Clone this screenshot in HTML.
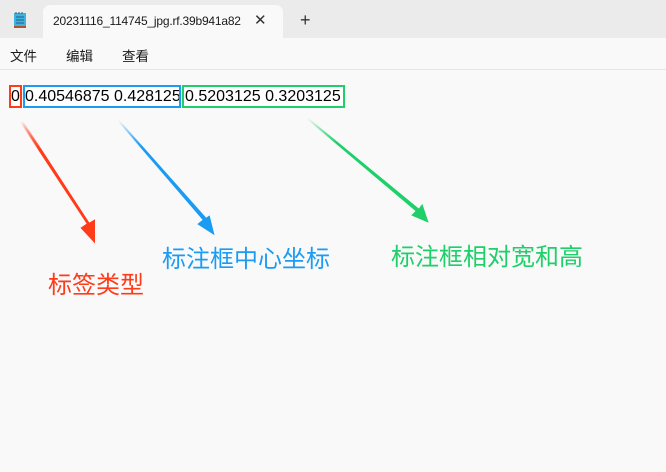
<!DOCTYPE html>
<html><head><meta charset="utf-8"><style>
*{margin:0;padding:0;box-sizing:border-box}
body{width:666px;height:472px;background:#f9f9f9;position:relative;overflow:hidden;font-family:"Liberation Sans","Noto Sans CJK SC",sans-serif}
.tabbar{position:absolute;left:0;top:0;width:666px;height:38px;background:#ebebeb}
.tab{position:absolute;left:43px;top:5px;width:240px;height:33px;background:#f9f9f9;border-radius:7px 7px 0 0}
.title{position:absolute;left:10px;top:9px;font-size:12px;color:#1a1a1a;letter-spacing:-0.2px}
.x{position:absolute;left:211px;top:6px;font-size:15px;color:#333}
.plus{position:absolute;left:300px;top:10px;font-size:18px;color:#333}
.menu{position:absolute;top:45px;font-size:13.5px;color:#1a1a1a}
.sep{position:absolute;left:0;top:69px;width:666px;height:1px;background:#e5e5e5}
.box{position:absolute;top:85px;height:23px;border:2px solid;background:#fff;overflow:hidden;font-size:16px;color:#000;white-space:pre;line-height:19px;padding-left:1px}
.lab{position:absolute;font-size:24px;white-space:nowrap}
</style></head><body>
<div class="tabbar">
<svg style="position:absolute;left:13px;top:11px" width="14" height="18" viewBox="0 0 14 18"><rect x="1" y="2" width="12" height="14" fill="#3fb2de"/><rect x="1" y="15" width="12" height="2" fill="#b4522a"/><g stroke="#1f5d86" stroke-width="1"><line x1="3" y1="6" x2="11" y2="6"/><line x1="3" y1="9" x2="11" y2="9"/><line x1="3" y1="12" x2="11" y2="12"/><line x1="3" y1="1" x2="3" y2="3"/><line x1="6" y1="1" x2="6" y2="3"/><line x1="9" y1="1" x2="9" y2="3"/></g></svg>
<div class="tab"><div class="title">20231116_114745_jpg.rf.39b941a82</div><div class="x">✕</div></div>
<div class="plus">+</div>
</div>
<div class="menu" style="left:10px">文件</div>
<div class="menu" style="left:66px">编辑</div>
<div class="menu" style="left:122px">查看</div>
<div class="sep"></div>
<div class="box" style="left:9px;width:13px;border-color:#ff3b1a;padding-left:0">0</div>
<div class="box" style="left:23px;width:158px;border-color:#1b9cf2;padding-left:0">0.40546875 0.428125</div>
<div class="box" style="left:182px;width:163px;border-color:#1ecf6a">0.5203125 0.3203125</div>
<svg style="position:absolute;left:0;top:0" width="666" height="472">
<defs>
<linearGradient id="gr" x1="20" y1="122" x2="93" y2="240" gradientUnits="userSpaceOnUse"><stop offset="0" stop-color="#ff3b1a" stop-opacity="0"/><stop offset=".25" stop-color="#ff3b1a"/></linearGradient>
<linearGradient id="gb" x1="118" y1="120" x2="212" y2="232" gradientUnits="userSpaceOnUse"><stop offset="0" stop-color="#1b9cf2" stop-opacity="0"/><stop offset=".25" stop-color="#1b9cf2"/></linearGradient>
<linearGradient id="gg" x1="307" y1="118" x2="427" y2="221" gradientUnits="userSpaceOnUse"><stop offset="0" stop-color="#1ecf6a" stop-opacity="0"/><stop offset=".25" stop-color="#1ecf6a"/></linearGradient>
</defs>
<polygon points="21,122 88,224 82,228 94,241 94,221 89,224 22,121" fill="url(#gr)" stroke="url(#gr)" stroke-width="2"/>
<polygon points="118,120 204,220 199,224 213,233 209,217 206,219" fill="url(#gb)" stroke="url(#gb)" stroke-width="2"/>
<polygon points="307,118 417,211 413,215 427,221 422,206 419,210" fill="url(#gg)" stroke="url(#gg)" stroke-width="2"/>
</svg>
<div class="lab" style="left:48px;top:265px;color:#ff3b1a">标签类型</div>
<div class="lab" style="left:162px;top:239px;color:#1b9cf2">标注框中心坐标</div>
<div class="lab" style="left:391px;top:237px;color:#1ecf6a">标注框相对宽和高</div>
</body></html>
